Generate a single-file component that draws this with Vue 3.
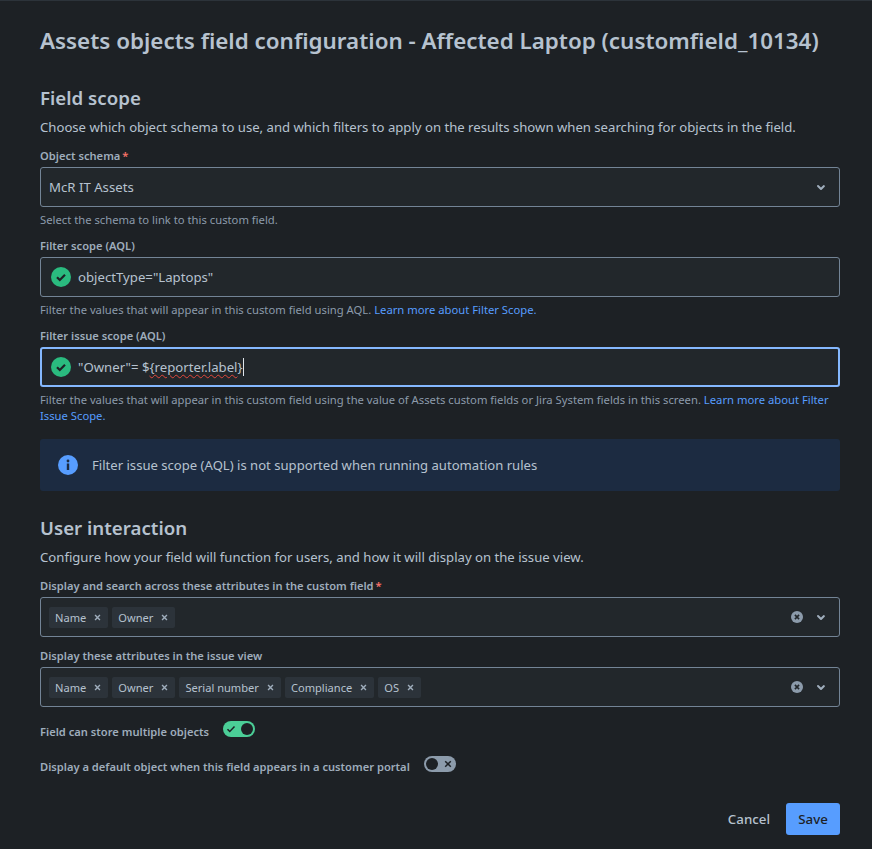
<template>
  <div class="page">
    <h1 class="title">Assets objects field configuration - Affected Laptop (customfield_10134)</h1>

    <section class="scope">
      <h2 class="heading">Field scope</h2>
      <p class="desc">Choose which object schema to use, and which filters to apply on the results shown when searching for objects in the field.</p>

      <label class="label first">Object schema<span class="req">*</span></label>
      <div class="box">
        <span class="value">McR IT Assets</span>
        <svg class="chevron" viewBox="0 0 24 24"><path d="M8.3 10.3a1 1 0 0 1 1.4 0L12 12.6l2.3-2.3a1 1 0 0 1 1.4 1.4l-3 3a1 1 0 0 1-1.4 0l-3-3a1 1 0 0 1 0-1.4z" fill="currentColor" /></svg>
      </div>
      <p class="help">Select the schema to link to this custom field.</p>

      <label class="label">Filter scope (AQL)</label>
      <div class="box aql">
        <svg class="ok" viewBox="0 0 20 20"><circle cx="10" cy="10" r="10" fill="#2abb7f" /><path d="M6 10.2l2.8 2.8L14 7.8" fill="none" stroke="#1d2125" stroke-width="2.2" /></svg>
        <span class="value">objectType="Laptops"</span>
      </div>
      <p class="help">Filter the values that will appear in this custom field using AQL. <a class="link">Learn more about Filter Scope.</a></p>

      <label class="label">Filter issue scope (AQL)</label>
      <div class="box aql focused">
        <svg class="ok" viewBox="0 0 20 20"><circle cx="10" cy="10" r="10" fill="#2abb7f" /><path d="M6 10.2l2.8 2.8L14 7.8" fill="none" stroke="#1d2125" stroke-width="2.2" /></svg>
        <span class="value">"Owner"= $<span class="squiggle">{reporter.label</span>}</span><span class="caret"></span>
      </div>
      <p class="help">Filter the values that will appear in this custom field using the value of Assets custom fields or Jira System fields in this screen. <a class="link">Learn more about Filter</a> <a class="link">Issue Scope.</a></p>

      <div class="banner">
        <svg class="info" viewBox="0 0 20 20"><circle cx="10" cy="10" r="10" fill="#579dff" /><rect x="8.8" y="8.5" width="2.4" height="6.5" fill="#1c2b41" /><circle cx="10" cy="6" r="1.4" fill="#1c2b41" /></svg>
        <span>Filter issue scope (AQL) is not supported when running automation rules</span>
      </div>
    </section>

    <section class="interaction">
      <h2 class="heading">User interaction</h2>
      <p class="desc">Configure how your field will function for users, and how it will display on the issue view.</p>

      <div v-for="field in attributeFields" :key="field.label">
        <label class="label first">{{ field.label }}<span v-if="field.required" class="req">*</span></label>
        <div class="box multi">
          <div class="tags">
            <span v-for="tag in field.tags" :key="tag" class="tag">
              {{ tag }}
              <svg class="tag-x" viewBox="0 0 8 8"><path d="M1.2 1.2l5.6 5.6M6.8 1.2L1.2 6.8" stroke="currentColor" stroke-width="1.6" /></svg>
            </span>
          </div>
          <svg class="clear" viewBox="0 0 12 12"><circle cx="6" cy="6" r="6" fill="#8c9bab" /><path d="M3.9 3.9l4.2 4.2M8.1 3.9L3.9 8.1" stroke="#22272b" stroke-width="1.6" /></svg>
          <svg class="chevron" viewBox="0 0 24 24"><path d="M8.3 10.3a1 1 0 0 1 1.4 0L12 12.6l2.3-2.3a1 1 0 0 1 1.4 1.4l-3 3a1 1 0 0 1-1.4 0l-3-3a1 1 0 0 1 0-1.4z" fill="currentColor" /></svg>
        </div>
      </div>

      <div class="toggle-row multiple">
        <span class="toggle-label">Field can store multiple objects</span>
        <span class="toggle on">
          <svg class="toggle-icon" viewBox="0 0 10 10"><path d="M1.5 5.2l2.3 2.3L8.5 2.6" fill="none" stroke="#1d2125" stroke-width="1.5" /></svg>
          <span class="knob"></span>
        </span>
      </div>
      <div class="toggle-row portal">
        <span class="toggle-label">Display a default object when this field appears in a customer portal</span>
        <span class="toggle off">
          <span class="knob"></span>
          <svg class="toggle-icon" viewBox="0 0 10 10"><path d="M2.2 2.2l5.6 5.6M7.8 2.2L2.2 7.8" stroke="#1d2125" stroke-width="1.5" /></svg>
        </span>
      </div>
    </section>

    <div class="actions">
      <button class="btn cancel">Cancel</button>
      <button class="btn save">Save</button>
    </div>
  </div>
</template>

<script setup>
const attributeFields = [
  { label: "Display and search across these attributes in the custom field", required: true, tags: ["Name", "Owner"] },
  { label: "Display these attributes in the issue view", required: false, tags: ["Name", "Owner", "Serial number", "Compliance", "OS"] },
];
</script>

<style>
html,
body {
  margin: 0;
  background: #1d2125;
}
</style>

<style scoped>
.page {
  box-sizing: border-box;
  width: 872px;
  height: 849px;
  padding: 24px 32px 0 40px;
  border-top: 1px solid #2c333a;
  background: #1d2125;
  color: #b6c2cf;
  font-family: "Noto Sans", "Open Sans", sans-serif;
  font-size: 14px;
  overflow: hidden;
}

.title {
  margin: 0;
  font-size: 22.4px;
  line-height: 32px;
  font-weight: 600;
  color: #b6c2cf;
}

.scope {
  margin-top: 27px;
}

.heading {
  margin: 0;
  font-size: 18.7px;
  line-height: 28px;
  font-weight: 600;
  color: #b6c2cf;
}

.desc {
  margin: 5px 0 0;
  font-size: 13.15px;
  line-height: 20px;
}

.label {
  display: block;
  margin-top: 10px;
  font-size: 11.15px;
  line-height: 16px;
  font-weight: 600;
  color: #9fadbc;
}

.label.first {
  margin-top: 11px;
}

.req {
  margin-left: 2px;
  color: #f87168;
}

.box {
  box-sizing: border-box;
  display: flex;
  align-items: center;
  height: 40px;
  margin-top: 3px;
  padding: 0 6px 0 8px;
  border: 1px solid #738496;
  border-radius: 3px;
  background: #22272b;
}

.value {
  flex: none;
  font-size: 13.2px;
}

.chevron {
  flex: none;
  width: 24px;
  height: 24px;
  margin-left: auto;
  color: #9fadbc;
}

.clear + .chevron {
  margin-left: 6px;
}

.aql {
  padding-left: 10px;
}

.ok {
  flex: none;
  width: 20px;
  height: 20px;
  margin-right: 7px;
}

.focused {
  border: 2px solid #85b8ff;
  padding-left: 9px;
}

.caret {
  width: 1px;
  height: 18px;
  background: #dee4ea;
}

.squiggle {
  text-decoration: underline wavy #e2483d 1px;
  text-underline-offset: 2px;
}

.help {
  margin: 5px 0 0;
  font-size: 11.25px;
  line-height: 16px;
  color: #8c9bab;
}

.link {
  color: #579dff;
}

.banner {
  display: flex;
  align-items: center;
  gap: 14px;
  height: 52px;
  margin-top: 15px;
  padding-left: 18px;
  border-radius: 3px;
  background: #1c2b41;
  font-size: 13.1px;
}

.info {
  flex: none;
  width: 20px;
  height: 20px;
}

.interaction {
  margin-top: 23px;
}

.interaction .desc {
  margin-top: 5px;
}

.multi {
  padding-left: 8px;
}

.tags {
  display: flex;
  gap: 4px;
}

.tag {
  display: flex;
  align-items: center;
  justify-content: space-between;
  gap: 8px;
  height: 21px;
  padding: 0 7px 0 6px;
  border-radius: 2px;
  background: #2c333a;
  font-size: 11.1px;
  color: #b6c2cf;
}

.tag-x {
  width: 7px;
  height: 7px;
  color: #9fadbc;
}

.clear {
  flex: none;
  width: 12px;
  height: 12px;
  margin-left: auto;
}

.toggle-row {
  display: flex;
  align-items: center;
  gap: 14px;
}

.multiple {
  margin-top: 12px;
}

.portal {
  margin-top: 15px;
}

.toggle-label {
  font-size: 11.15px;
  line-height: 20px;
  font-weight: 600;
  color: #9fadbc;
  position: relative;
  top: 3px;
}

.toggle {
  box-sizing: border-box;
  display: flex;
  align-items: center;
  justify-content: space-between;
  width: 32px;
  height: 16px;
  padding: 0 2px 0 3px;
  border-radius: 8px;
}

.toggle.on {
  background: #4bce97;
}

.toggle.off {
  padding: 0 3px 0 2px;
  background: #8c9bab;
}

.toggle-icon {
  width: 10px;
  height: 10px;
}

.knob {
  width: 12px;
  height: 12px;
  border-radius: 50%;
  background: #1d2125;
}

.actions {
  display: flex;
  justify-content: flex-end;
  gap: 4px;
  margin-top: 29px;
}

.btn {
  height: 32px;
  border: 0;
  border-radius: 3px;
  padding: 0 12px;
  font-family: inherit;
  font-size: 13.3px;
  font-weight: 500;
}

.cancel {
  background: transparent;
  color: #b6c2cf;
}

.save {
  width: 54px;
  padding: 0;
  background: #579dff;
  color: #1d2125;
}
</style>
